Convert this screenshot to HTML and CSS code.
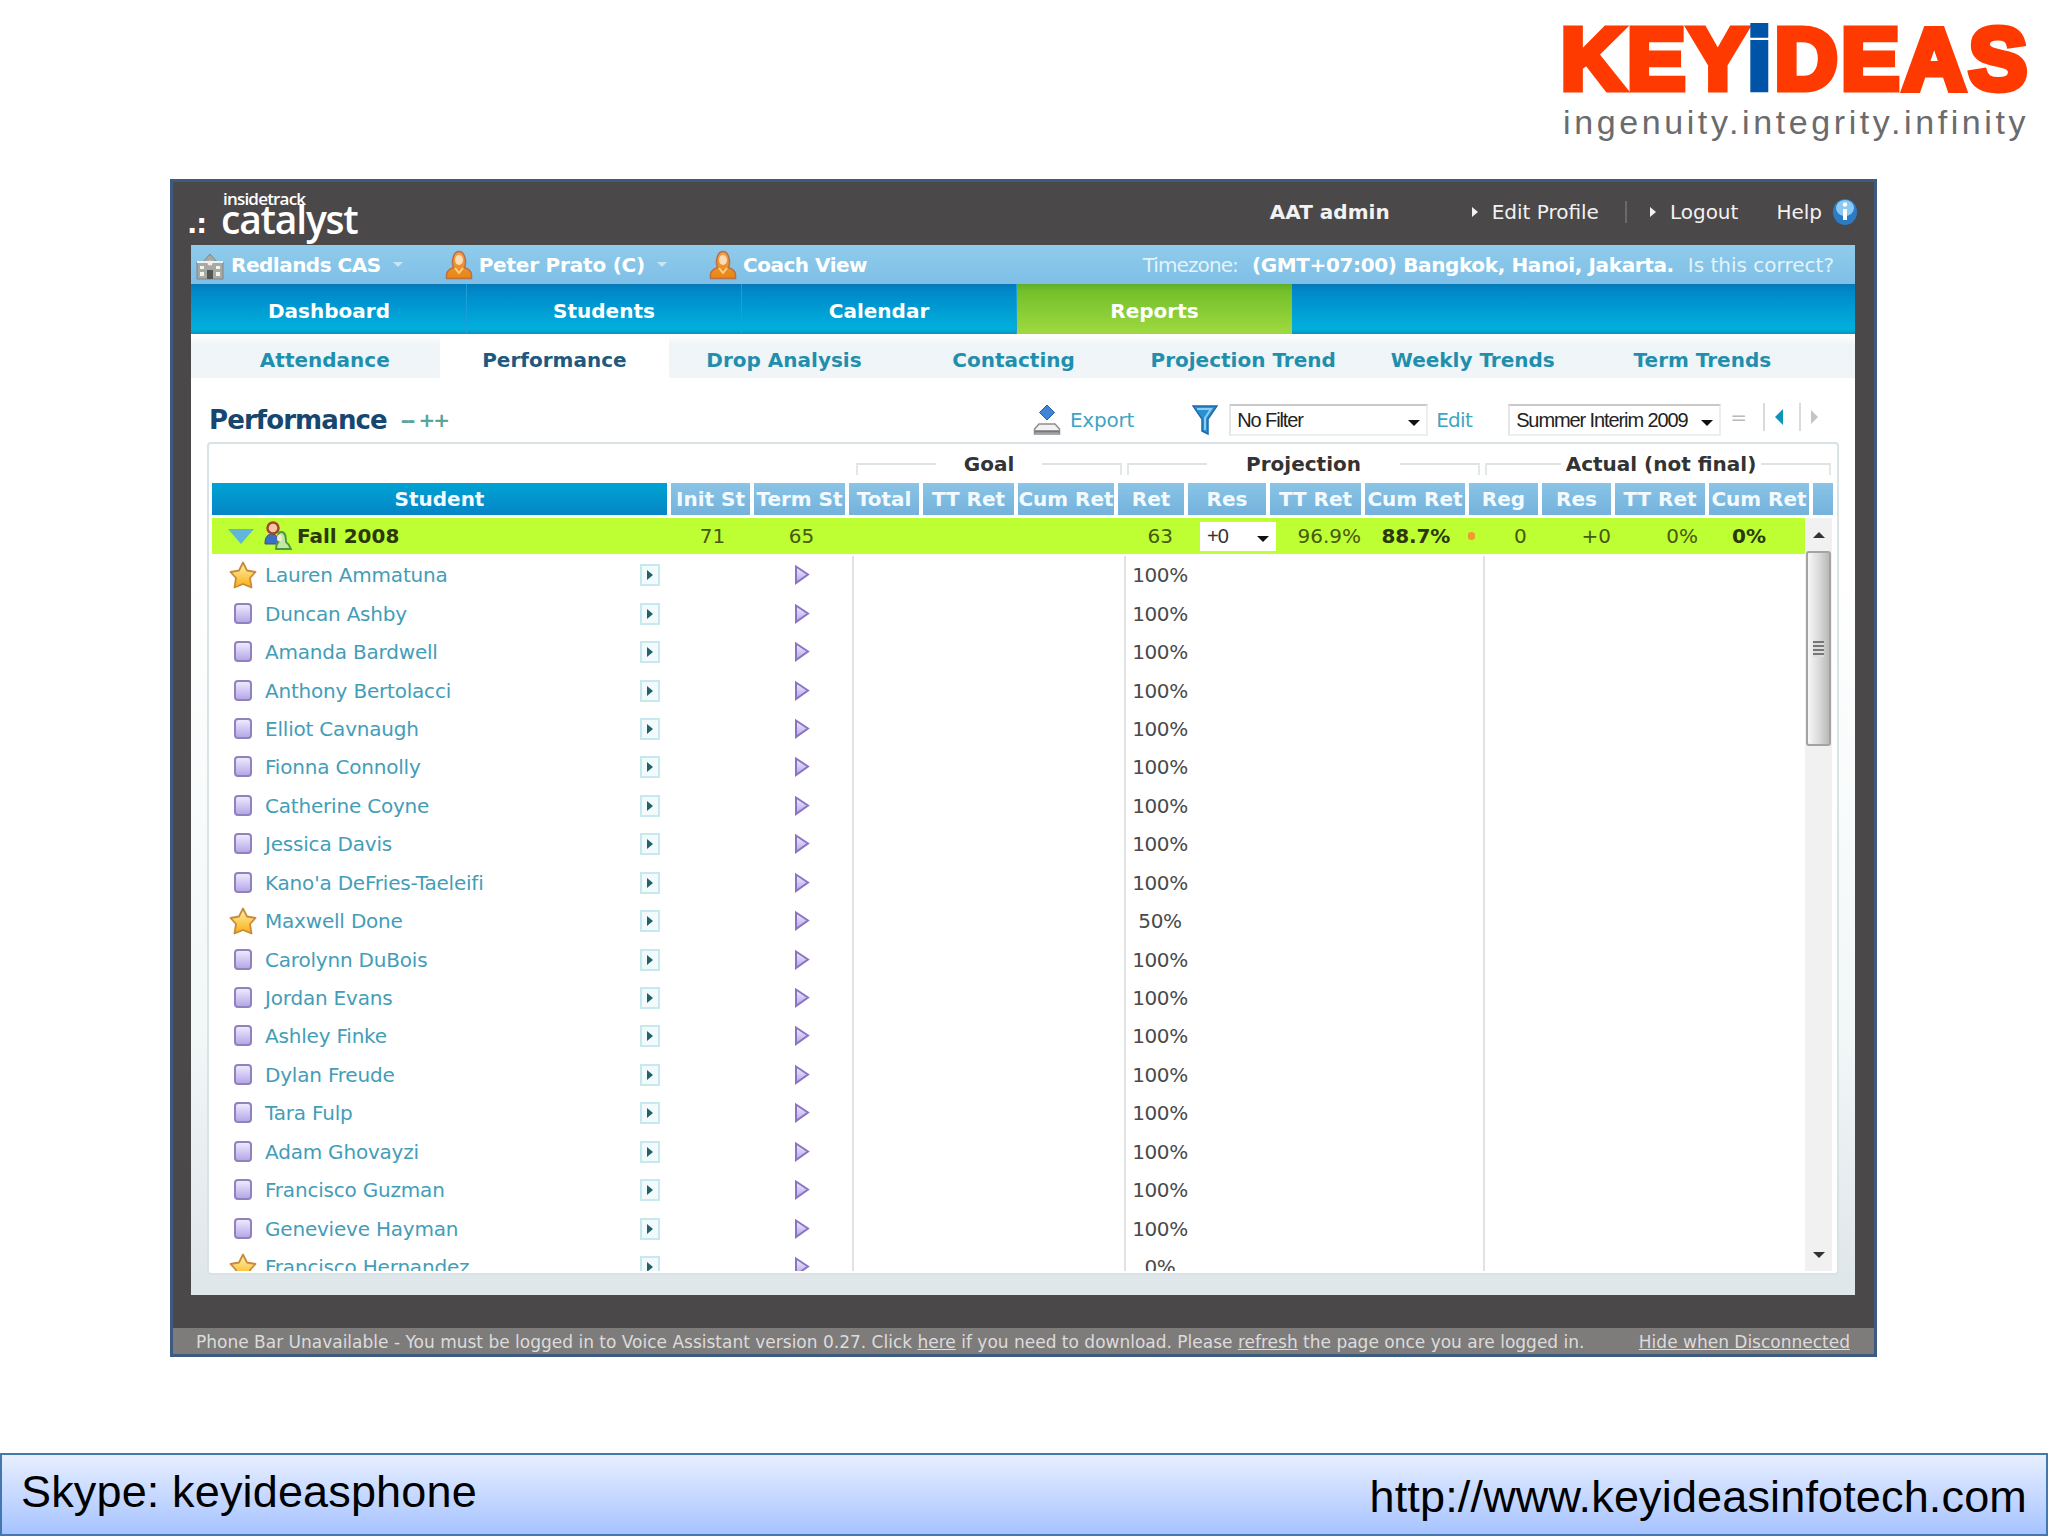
FILE: index.html
```
<!DOCTYPE html>
<html lang="en">
<head>
    <meta charset="UTF-8">
    <title>Catalyst - Performance</title>
    <link rel="stylesheet" href="styles.css">
</head>
<body>

<!-- Icons -->
<svg class="defs" width="0" height="0">
    <defs>
        <linearGradient id="gold" x1="0" y1="0" x2="0" y2="1">
            <stop offset="0" stop-color="#fff3b0"/>
            <stop offset="1" stop-color="#f9ae10"/>
        </linearGradient>
        <linearGradient id="lilac" x1="0" y1="0" x2="0" y2="1">
            <stop offset="0" stop-color="#f1edff"/>
            <stop offset="1" stop-color="#b3a4e6"/>
        </linearGradient>
        <linearGradient id="orange" x1="0" y1="0" x2="0" y2="1">
            <stop offset="0" stop-color="#f3a04a"/>
            <stop offset="1" stop-color="#e98410"/>
        </linearGradient>
    </defs>
    <symbol id="star" viewBox="0 0 28 28">
        <path d="M14 1.500l4 8 8.500 1.500-5.500 6 1.500 9.500-8.500-3.500-8.500 3.500 1.500-9.500-5.500-6L10 9.500z" fill="url(#gold)" stroke="#c98a3c" stroke-width="1.8" stroke-linejoin="round"/>
    </symbol>
    <symbol id="square" viewBox="0 0 28 28">
        <rect x="6" y="4" width="16" height="19" rx="3" fill="url(#lilac)" stroke="#8f82bd" stroke-width="2"/>
    </symbol>
    <symbol id="person" viewBox="0 0 28 30">
        <path d="M1.500 28.500v-4c0-3 2-5 7-7C7 14 7.500 10 8 8c1-4 3-6.500 6-6.500S19 4 20 8c.5 2 1 6-.5 9.500 5 2 7 4 7 7v4z" fill="url(#orange)" stroke="#b8704a" stroke-width="1.500"/>
        <ellipse cx="14" cy="10" rx="4" ry="5" fill="#fbdcb4"/>
        <path d="M10 18l4 5 4-5" fill="none" stroke="#ffd08a" stroke-width="2"/>
    </symbol>
</svg>

<header class="brand">
    <div class="brand-name">KEY<span>i</span>DEAS</div>
    <div class="brand-tagline">ingenuity.integrity.infinity</div>
</header>

<main class="app">
    <div class="topbar">
        <div class="logo">
            <span class="logo-dots">.:</span>
            <div class="logo-words">
                <span class="logo-small">insidetrack</span>
                <span class="logo-big">catalyst</span>
            </div>
        </div>
        <div class="account">
            <b class="user">AAT admin</b>
            <i class="caret"></i>
            <span class="edit-profile">Edit Profile</span>
            <i class="bar"></i>
            <i class="caret"></i>
            <span class="logout">Logout</span>
            <span class="help">Help</span>
            <svg class="info" viewBox="0 0 26 28">
                <ellipse cx="13" cy="14" rx="12" ry="13" fill="#2b7cc4"/>
                <ellipse cx="13" cy="10" rx="9" ry="8" fill="#8cc8f0"/>
                <path d="M13 11v11" stroke="#fff" stroke-width="4"/>
                <circle cx="13" cy="6.500" r="2.200" fill="#fff"/>
            </svg>
        </div>
    </div>

    <div class="page">
        <div class="userbar">
            <svg class="school" viewBox="0 0 28 30">
                <path d="M1 11h6l7-8 7 8h6v17H1z" fill="#a9a9a4" stroke="#7d8588"/>
                <path d="M1 11h26" stroke="#eef2f2" stroke-width="2"/>
                <path d="M4 15h4v3H4zM4 21h4v4H4zM20 15h4v3h-4zM20 21h4v4h-4z" fill="#f4f4f0"/>
                <circle cx="14" cy="12" r="2.500" fill="#eee"/>
                <path d="M11 28v-9h6v9z" fill="#555"/>
            </svg>
            <b class="school-name">Redlands CAS</b><i class="down"></i>
            <svg class="person"><use href="#person"/></svg>
            <b class="coach-name">Peter Prato (C)</b><i class="down"></i>
            <svg class="person"><use href="#person"/></svg>
            <b class="view-name">Coach View</b>
            <div class="timezone">
                <span class="tz-label">Timezone:</span>
                <b>(GMT+07:00) Bangkok, Hanoi, Jakarta.</b>
                <span>Is this correct?</span>
            </div>
        </div>

        <nav class="tabs">
            <a>Dashboard</a>
            <a>Students</a>
            <a>Calendar</a>
            <a class="active">Reports</a>
        </nav>
        <nav class="subtabs">
            <a>Attendance</a>
            <a class="active">Performance</a>
            <a>Drop Analysis</a>
            <a>Contacting</a>
            <a>Projection Trend</a>
            <a>Weekly Trends</a>
            <a>Term Trends</a>
        </nav>

        <div class="toolbar">
            <h1>Performance</h1>
            <span class="expand">-- ++</span>
            <svg class="export-icon" viewBox="0 0 28 32">
                <path d="M6 20h16l4.500 5v5h-25v-5z" fill="#f2f2f2" stroke="#8d8d90" stroke-width="1.500"/>
                <path d="M2 27.500h24" stroke="#77777c" stroke-width="2.500"/>
                <path d="M14 1l7.500 7.500L14 16 6.500 8.500z" fill="#3f85d3" stroke="#2a62a8"/>
            </svg>
            <span class="export">Export</span>
            <svg class="funnel" viewBox="0 0 26 32">
                <path d="M1 2h24l-9 13v15l-6-3V15z" fill="#2b8fd0" stroke="#1c6cab" stroke-width="1.500"/>
                <path d="M5 5h14l-6 9v12" fill="none" stroke="#8ccdf2" stroke-width="2"/>
            </svg>
            <div class="select filter"><span>No Filter</span><i></i></div>
            <span class="edit">Edit</span>
            <div class="select term"><span>Summer Interim 2009</span><i></i></div>
            <span class="equals">=</span>
            <div class="pager"><i class="prev"></i></div>
            <div class="pager"><i class="next"></i></div>
        </div>

        <section class="panel">
            <div class="groups">
                <div class="group goal"><i></i><b>Goal</b><i></i></div>
                <div class="group projection"><i></i><b>Projection</b><i></i></div>
                <div class="group actual"><i></i><b>Actual (not final)</b><i></i></div>
            </div>
            <div class="grid head">
                <div class="student">Student</div>
                <div>Init St</div>
                <div>Term St</div>
                <div>Total</div>
                <div>TT Ret</div>
                <div>Cum Ret</div>
                <div>Ret</div>
                <div>Res</div>
                <div>TT Ret</div>
                <div>Cum Ret</div>
                <div>Reg</div>
                <div>Res</div>
                <div>TT Ret</div>
                <div>Cum Ret</div>
                <div></div>
            </div>
            <div class="scroller">
                <div class="rows" id="rows">
                    <div class="grid total">
                        <div class="term-name">
                            <i class="open"></i>
                            <svg class="people" viewBox="0 0 28 30">
                                <path d="M1 22c0-6 3-9 7-9s6 3 6 8v2H1z" fill="#3d6fc4" stroke="#34508a"/>
                                <circle cx="9" cy="7" r="5.500" fill="#f3c9a2" stroke="#a8432d" stroke-width="2.500"/>
                                <path d="M12 28c0-4 1-6 3-8-2-4-1-9 2-9 5 0 5 6 5 10 3 2 4 4 5 7z" fill="#bfe8a0" stroke="#4d9440" stroke-width="1.800"/>
                                <ellipse cx="15.500" cy="17" rx="2.500" ry="3.500" fill="#fbe6d0"/>
                            </svg>
                            <b>Fall 2008</b>
                        </div>
                        <div class="mid">71</div>
                        <div class="mid">65</div>
                        <div></div>
                        <div></div>
                        <div></div>
                        <div class="end ret-sum">63</div>
                        <div class="res-select"><span>+0</span><i></i></div>
                        <div class="end">96.9%</div>
                        <div class="end cum"><b>88.7%</b><i class="dot"></i></div>
                        <div class="reg">0</div>
                        <div class="end">+0</div>
                        <div class="end tt">0%</div>
                        <div class="cum-last"><b>0%</b></div>
                    </div>
                </div>
                <div class="scrollbar">
                    <i class="up"></i>
                    <div class="thumb"><i></i></div>
                    <i class="dn"></i>
                </div>
            </div>
        </section>
    </div>

    <div class="phonebar">
        <span>Phone Bar Unavailable - You must be logged in to Voice Assistant version 0.27. Click <u>here</u> if you need to download. Please <u>refresh</u> the page once you are logged in.</span>
        <u>Hide when Disconnected</u>
    </div>
</main>

<footer>
    <span class="skype">Skype: keyideasphone</span>
    <span class="url">http://www.keyideasinfotech.com</span>
</footer>

<script>
    // name, retention, starred
    var students = [
        ["Lauren Ammatuna", "100%", true],
        ["Duncan Ashby", "100%"],
        ["Amanda Bardwell", "100%"],
        ["Anthony Bertolacci", "100%"],
        ["Elliot Cavnaugh", "100%"],
        ["Fionna Connolly", "100%"],
        ["Catherine Coyne", "100%"],
        ["Jessica Davis", "100%"],
        ["Kano'a DeFries-Taeleifi", "100%"],
        ["Maxwell Done", "50%", true],
        ["Carolynn DuBois", "100%"],
        ["Jordan Evans", "100%"],
        ["Ashley Finke", "100%"],
        ["Dylan Freude", "100%"],
        ["Tara Fulp", "100%"],
        ["Adam Ghovayzi", "100%"],
        ["Francisco Guzman", "100%"],
        ["Genevieve Hayman", "100%"],
        ["Francisco Hernandez", "0%", true]
    ];

    var rows = document.getElementById("rows");
    students.forEach(function (s) {
        var row = document.createElement("div");
        row.className = "grid row";
        row.innerHTML =
            '<div class="name"><svg><use href="#' + (s[2] ? "star" : "square") + '"/></svg>' +
            '<span>' + s[0] + '</span><i class="go"></i></div>' +
            '<div></div>' +
            '<div class="mid"><svg class="play" viewBox="0 0 18 22"><path d="M3 2.500l12 8L3 19z" fill="url(#lilac)" stroke="#8b74c4" stroke-width="2"/></svg></div>' +
            '<div class="line l1"></div><div></div><div></div>' +
            '<div class="line l2">' + s[1] + '</div><div></div><div></div><div></div>' +
            '<div class="line l3"></div>';
        rows.appendChild(row);
    });
</script>

</body>
</html>
```
FILE: styles.css
```
* {
    box-sizing: border-box;
}

body {
    margin: 0;
    width: 2048px;
    height: 1536px;
    overflow: hidden;
    background: #fff;
    font-family: "DejaVu Sans", Verdana, sans-serif;
    font-size: 20px;
    display: flex;
    flex-direction: column;
}

.defs {
    position: absolute;
}

i {
    display: block;
    font-style: normal;
}

/* Company logo */
.brand {
    height: 179px;
    padding: 8px 0 0 1561px;
    display: flex;
    flex-direction: column;
    align-items: flex-start;
    font-family: "Liberation Sans", Arial, sans-serif;
    white-space: nowrap;
}

.brand-name {
    height: 96px;
    line-height: 101px;
    font-size: 87px;
    font-weight: bold;
    letter-spacing: 3.5px;
    color: #ff3a00;
    -webkit-text-stroke: 7px #ff3a00;
}

.brand-name span {
    color: #0054a8;
    -webkit-text-stroke: 6px #0054a8;
}

.brand-tagline {
    padding-left: 2px;
    font-size: 34px;
    line-height: 36px;
    letter-spacing: 3.6px;
    color: #6b6b6d;
}

/* Window */
.app {
    width: 1707px;
    height: 1178px;
    margin-left: 170px;
    border: 3px solid #3d5a80;
    background: #4a4849;
    display: flex;
    flex-direction: column;
    white-space: nowrap;
}

.topbar {
    height: 63px;
    display: flex;
    justify-content: space-between;
    color: #f2f2f2;
}

.logo {
    display: flex;
    padding-left: 14px;
    font-family: "Open Sans", sans-serif;
    color: #fff;
}

.logo-dots {
    width: 23px;
    font-family: "DejaVu Sans", sans-serif;
    font-size: 27px;
    line-height: 84px;
    font-weight: bold;
    letter-spacing: -1px;
}

.logo-words {
    display: flex;
    flex-direction: column;
    padding: 10px 0 0 11px;
}

.logo-small {
    font-size: 17px;
    line-height: 14px;
    padding-left: 2px;
    font-weight: 600;
    letter-spacing: -0.8px;
}

.logo-big {
    font-size: 39px;
    line-height: 26px;
    font-weight: 600;
    letter-spacing: -1.2px;
}

.account {
    display: flex;
    align-items: center;
    height: 60px;
    padding-right: 16px;
}

.caret {
    border-left: 6px solid #f2f2f2;
    border-top: 5px solid transparent;
    border-bottom: 5px solid transparent;
}

.user {
    margin-right: 82px;
}

.edit-profile {
    margin-left: 14px;
}

.bar {
    width: 2px;
    height: 22px;
    background: #6a6a6a;
    margin: 0 23px 0 26px;
}

.logout {
    margin-left: 14px;
    margin-right: 38px;
}

.info {
    width: 26px;
    height: 28px;
    margin-left: 10px;
}

.page {
    width: 1664px;
    height: 1050px;
    margin-left: 18px;
    background: linear-gradient(#fff 30%, #f2f7f8 75%, #e0e7ea 98%);
    display: flex;
    flex-direction: column;
}

.userbar {
    height: 39px;
    background: linear-gradient(#8fcbeb, #7fbfe6);
    color: #fff;
    display: flex;
    align-items: center;
}

.userbar svg {
    width: 28px;
    height: 30px;
}

.school {
    margin: 2px 7px 0 5px;
}

.school-name, .view-name {
    letter-spacing: -0.5px;
}

.coach-name {
    letter-spacing: -0.2px;
}

.person {
    margin-left: 42px;
    margin-right: 6px;
}

.down {
    border-top: 5px solid #c8e6f5;
    border-left: 5px solid transparent;
    border-right: 5px solid transparent;
    margin-left: 12px;
}

.timezone {
    margin-left: auto;
    padding-right: 21px;
    display: flex;
    gap: 14px;
    color: #e3f3fb;
}

.timezone b {
    color: #fff;
    letter-spacing: -0.37px;
}

.tz-label {
    letter-spacing: -0.9px;
}

/* Navigation */
.tabs {
    height: 50px;
    display: flex;
    padding-left: 1px;
    background: linear-gradient(#0679b5, #0089cb 15%, #00b0dc 90%, #0b93b8);
}

.tabs a {
    width: 275px;
    line-height: 54px;
    text-align: center;
    font-weight: bold;
    color: #fff;
    border-right: 1px solid #1b9fd8;
}

.tabs .active {
    background: linear-gradient(#5fae2a, #74c02a 15%, #9dd840 95%);
    border: none;
}

.subtabs {
    height: 44px;
    display: flex;
    padding-left: 19px;
    background: linear-gradient(#fff, #eef4f7 12px, #f1f5f8);
}

.subtabs a {
    width: 229.6px;
    line-height: 53px;
    text-align: center;
    font-weight: bold;
    color: #1f8fae;
}

.subtabs .active {
    background: #fff;
    color: #20597f;
}

/* Toolbar */
.toolbar {
    height: 64px;
    padding-left: 18px;
    display: flex;
    align-items: center;
    padding-top: 20px;
    color: #3ea5c4;
}

.toolbar h1 {
    margin: 0;
    font-size: 26px;
    letter-spacing: -0.9px;
    color: #17466f;
}

.expand {
    margin-left: 14px;
    letter-spacing: -2px;
    color: #58a59a;
    font-weight: bold;
}

.select {
    height: 32px;
    border: 2px solid #c9c9c9;
    border-left-color: #e6e6e6;
    border-bottom-color: #eee;
    border-right-color: #eee;
    background: #fff;
    display: flex;
    align-items: center;
    justify-content: space-between;
    padding: 0 6px;
    font-family: "Liberation Sans", Arial, sans-serif;
    letter-spacing: -1.1px;
    color: #222;
}

.select i, .res-select i {
    border-top: 6px solid #111;
    border-left: 6px solid transparent;
    border-right: 6px solid transparent;
    margin-top: 6px;
}

.export-icon {
    width: 28px;
    height: 32px;
    margin-left: 585px;
}

.export {
    margin-left: 9px;
    letter-spacing: -0.2px;
}

.funnel {
    width: 26px;
    height: 32px;
    margin-left: 58px;
}

.filter {
    width: 199px;
    margin-left: 11px;
}

.edit {
    margin-left: 8px;
    letter-spacing: -0.7px;
}

.term {
    width: 213px;
    margin-left: 36px;
}

.equals {
    margin-left: 9px;
    margin-bottom: 6px;
    color: #bbb;
}

.pager {
    height: 28px;
    border-left: 2px solid #dadada;
    display: flex;
    align-items: center;
    margin: 0 0 6px 16px;
    padding-left: 10px;
}

.prev {
    border-right: 8px solid #0f93b8;
    border-top: 8px solid transparent;
    border-bottom: 8px solid transparent;
}

.next {
    border-left: 7px solid #c4c4c4;
    border-top: 7px solid transparent;
    border-bottom: 7px solid transparent;
}

/* Table */
.panel {
    width: 1632px;
    height: 833px;
    margin-left: 16px;
    border: 2px solid #d9e2e5;
    border-radius: 4px;
    background: #fff;
    padding-left: 3px;
}

.groups {
    height: 39px;
    display: flex;
    gap: 5px;
    padding-left: 644px;
    color: #333;
}

.group {
    display: flex;
    align-items: center;
    justify-content: space-between;
}

.group i {
    width: 80px;
    height: 12px;
    margin-top: 10px;
    border-top: 2px solid #dde4e2;
}

.group i:first-child {
    border-left: 2px solid #e3e8e6;
}

.group i:last-child {
    border-right: 2px solid #e3e8e6;
}

.goal {
    width: 266px;
}

.projection {
    width: 353px;
}

.actual {
    width: 346px;
}

.actual i {
    width: 76px;
}

.actual i:last-child {
    width: 70px;
}

.grid {
    display: grid;
    grid-template-columns: 455px 79px 91px 70px 91px 96px 66px 78px 91px 100px 69px 69px 90px 100px 20px;
    column-gap: 4px;
    align-items: center;
}

.head {
    height: 32px;
    color: #f2fafe;
    font-weight: bold;
}

.head div {
    height: 32px;
    line-height: 32px;
    overflow: hidden;
    display: flex;
    justify-content: center;
    background: linear-gradient(#8ac4e6, #74b2dc);
}

.head .student {
    background: linear-gradient(#00a3d3, #0585c6);
}

.scroller {
    margin-top: 3px;
    height: 753px;
    display: flex;
}

.rows {
    width: 1593px;
    overflow: hidden;
}

.total {
    height: 36px;
    background: #bdff33;
    color: #47590f;
    margin-bottom: 2px;
}

.total b {
    color: #2c380c;
}

.term-name {
    display: flex;
    align-items: center;
}

.open {
    border-top: 15px solid #5fb6d8;
    border-left: 13px solid transparent;
    border-right: 13px solid transparent;
    margin-left: 16px;
}

.people {
    width: 28px;
    height: 30px;
    margin: 0 5px 0 10px;
}

.mid {
    display: flex;
    justify-content: center;
    padding-left: 4px;
}

.end {
    display: flex;
    justify-content: flex-end;
    align-items: center;
}

.ret-sum {
    padding-right: 11px;
}

.res-select {
    width: 76px;
    height: 29px;
    margin-left: 12px;
    background: #fff;
    color: #333;
    display: flex;
    align-items: center;
    justify-content: space-between;
    padding: 0 7px;
    font-family: "Liberation Sans", Arial, sans-serif;
    letter-spacing: -1px;
}

.cum {
    margin-right: -10px;
    letter-spacing: -0.2px;
}

.dot {
    flex: none;
    width: 7px;
    height: 8px;
    margin-left: 18px;
    border-radius: 3px;
    background: #f59a2c;
}

.reg {
    padding-left: 45px;
}

.tt {
    padding-right: 7px;
}

.cum-last {
    padding-left: 23px;
}

.row {
    height: 38.45px;
    color: #449db8;
    align-items: stretch;
}

.row > div {
    display: flex;
    align-items: center;
}

.name svg {
    width: 28px;
    height: 28px;
    margin-left: 17px;
}

.name span {
    margin-left: 8px;
    letter-spacing: -0.2px;
}

.go {
    width: 20px;
    height: 22px;
    margin-left: auto;
    margin-right: 7px;
    border: 2px solid #c6e8ee;
    background: #f1fbfc;
    display: flex;
    align-items: center;
    justify-content: center;
}

.go::after {
    content: "";
    border-left: 6px solid #25606b;
    border-top: 5px solid transparent;
    border-bottom: 5px solid transparent;
}

.play {
    width: 18px;
    height: 22px;
}

.line {
    border-left: 2px solid #e2e2e2;
    color: #4a4a4a;
}

.l1 {
    margin-left: 3px;
}

.row .l2 {
    margin-left: 6px;
    margin-right: -10px;
    justify-content: center;
    letter-spacing: -0.4px;
}

.l3 {
    margin-left: 14px;
}

.scrollbar {
    width: 27px;
    background: #f1f1f1;
    display: flex;
    flex-direction: column;
    align-items: center;
}

.up {
    border-bottom: 6px solid #333;
    border-left: 6px solid transparent;
    border-right: 6px solid transparent;
    margin: 14px 0 13px;
}

.thumb {
    width: 25px;
    height: 195px;
    border: 2px solid #a3a3a3;
    border-radius: 3px;
    background: linear-gradient(90deg, #f7f7f7, #dcdcdc 50%, #b9b9b9);
    display: flex;
    align-items: center;
    justify-content: center;
}

.thumb i {
    width: 11px;
    height: 16px;
    background: repeating-linear-gradient(#777 0 2px, #ddd 2px 4px);
}

.dn {
    border-top: 6px solid #333;
    border-left: 6px solid transparent;
    border-right: 6px solid transparent;
    margin: auto 0 13px;
}

/* Phone bar */
.phonebar {
    height: 26px;
    margin-top: auto;
    padding: 0 24px 0 23px;
    background: #7e7b7b;
    color: #dcdcdc;
    font-size: 17px;
    line-height: 28px;
    display: flex;
    justify-content: space-between;
}

footer {
    height: 83px;
    margin-top: auto;
    border: 2px solid #4477b0;
    background: linear-gradient(#e8efff, #d4e2ff 30%, #a6c3ff);
    display: flex;
    justify-content: space-between;
    padding: 0 19px;
    font-family: "Liberation Sans", Arial, sans-serif;
    font-size: 45px;
    letter-spacing: 0.15px;
    color: #000;
}

.skype {
    line-height: 74px;
}

.url {
    line-height: 84px;
}
```
